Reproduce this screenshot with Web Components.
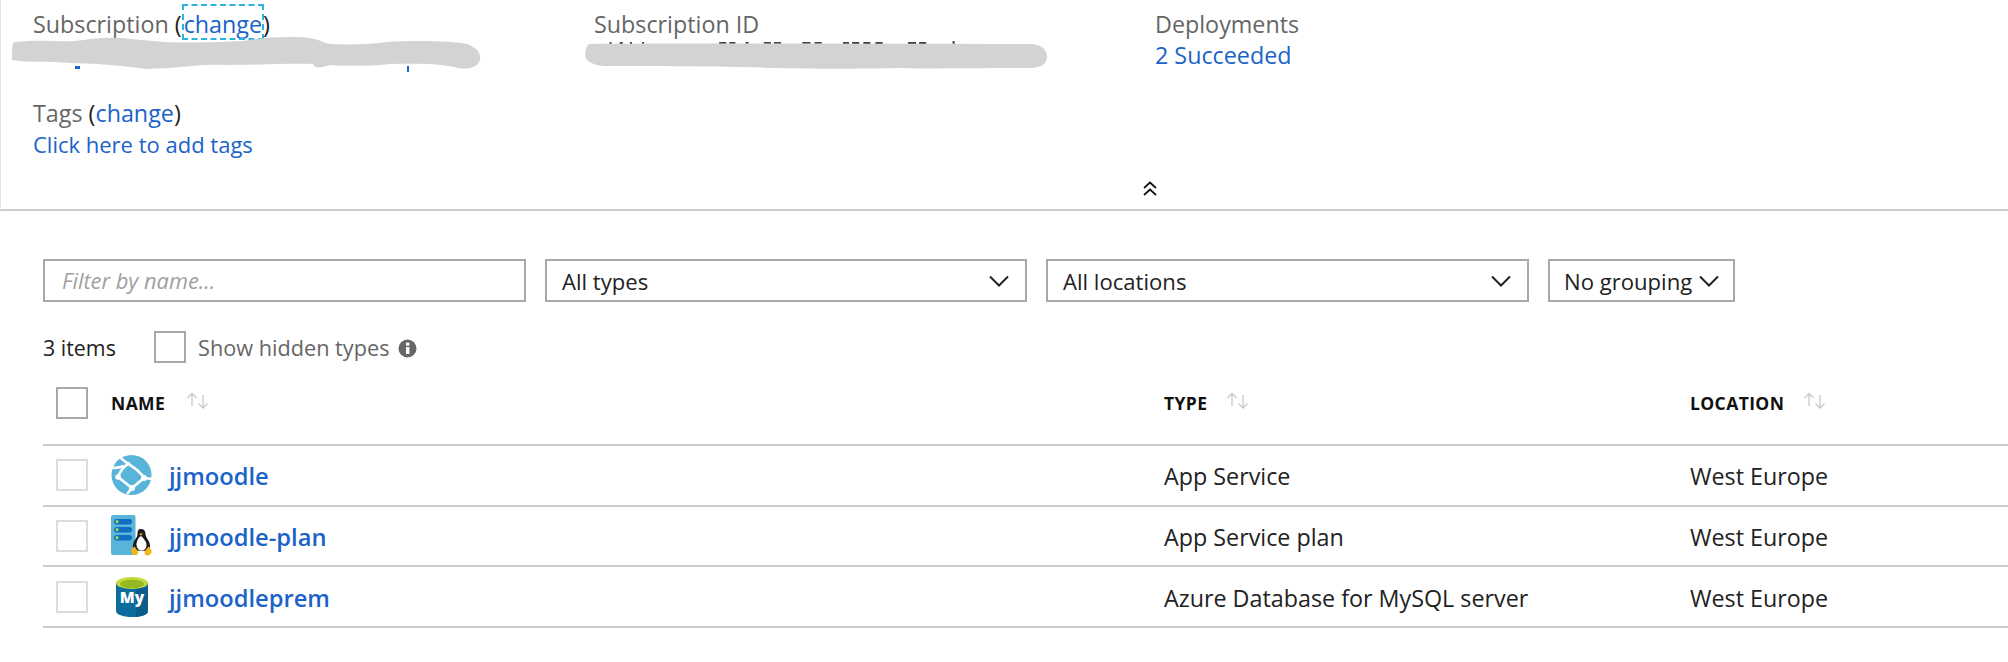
<!DOCTYPE html>
<html lang="en"><head><meta charset="utf-8"><title>Resource group</title>
<style>
html,body{margin:0;background:#fff}
body{font:22px/28px "Open Sans","Noto Sans",sans-serif;color:#111;--link:#1a63c8;width:2008px;height:662px;overflow:hidden}
</style></head><body>
<az-essentials>
  <az-field label="Subscription" change focused><az-redact kind="a"></az-redact></az-field>
  <az-field label="Subscription ID"><az-redact kind="b"></az-redact></az-field>
  <az-field label="Deployments"><az-link>2 Succeeded</az-link></az-field>
  <az-field label="Tags" change class="tags"><az-link small>Click here to add tags</az-link></az-field>
</az-essentials>
<az-toolbar>
  <az-input placeholder="Filter by name..."></az-input>
  <az-select w="482">All types</az-select>
  <az-select w="483">All locations</az-select>
  <az-select w="187" tight>No grouping</az-select>
</az-toolbar>
<az-count></az-count>
<az-table>
  <az-head></az-head>
  <az-row name="jjmoodle" type="App Service" location="West Europe" icon="web"></az-row>
  <az-row name="jjmoodle-plan" type="App Service plan" location="West Europe" icon="plan"></az-row>
  <az-row name="jjmoodleprem" type="Azure Database for MySQL server" location="West Europe" icon="mysql"></az-row>
</az-table>
<script>
const base=':host{box-sizing:border-box}*{box-sizing:border-box}';
function def(name,html){
  customElements.define(name,class extends HTMLElement{
    constructor(){super();this.attachShadow({mode:'open'})}
    connectedCallback(){this.shadowRoot.innerHTML='<style>'+base+'</style>'+(typeof html==='function'?html(this):html);}
  });
}
def('az-link',el=>`<style>:host{display:inline;color:var(--link);font-size:${el.hasAttribute('small')?'22px':'23.3px'}}</style><slot></slot>`);
def('az-check',el=>`<style>:host{display:block;width:32px;height:32px;border:2px solid ${el.getAttribute('tone')||'#a8a8a8'};background:#fff;flex:none}</style>`);
def('az-essentials',`<style>
:host{display:grid;grid-template-columns:561px 561px 561px;grid-auto-rows:min-content;row-gap:30px;height:211px;padding:10px 0 0 33px;border-bottom:2px solid #ccc;border-left:1px solid #e4e4e4;position:relative}
.chev{position:absolute;left:1140px;top:180px;width:18px;height:17px}
</style><slot></slot>
<svg class="chev" viewBox="0 0 18 17" fill="none" stroke="#111" stroke-width="1.7"><path d="M3 8 9 2.500 15 8M3 15 9 9.500 15 15"/></svg>`);
def('az-field',el=>`<style>
:host{display:block;position:relative;margin-left:-1px}
.l{color:#666;height:28px;font-size:23.3px}.p{color:#222}
.c{color:var(--link)}
.f{outline:2px dashed #27b4dd;display:inline-block;height:32px;line-height:28px;vertical-align:top;margin:-4px 1px 0 2px;padding-top:4px}
.v{margin-top:3px;height:28px}
</style>
<div class="l">${el.getAttribute('label')}${el.hasAttribute('change')?` <span class="p">(<span class="c${el.hasAttribute('focused')?' f':''}">change</span>)</span>`:''}</div>
<div class="v"><slot></slot></div>`);
def('az-redact',el=>{
 const a=el.getAttribute('kind')==='a';
 return `<style>:host{display:block;position:relative;height:28px}svg{position:absolute;overflow:visible}</style>`+
 (a?`<svg style="left:-22px;top:-2px" width="470" height="34" viewBox="0 0 470 34">
 <path d="M64 27h5v3h-5zM396 27h2v6h-2z" fill="#1a63c8"/>
 <path fill="#d2d3d5" d="M4 3C30 0 50 3 64 2 78 1 85 -2 110 -1 125 0 135 2 155 3 175 4 215 3 232 2 250 -2 285 -3 298 -1 308 0 312 4 320 5 340 6 365 5 375 3 395 1 445 2 456 5 467 9 470 15 469 21 467 28 458 31 447 29 435 25 410 24 380 25 370 26 345 28 320 26 310 28 305 31 302 25 280 24 250 26 215 26 185 25 175 29 135 30 120 28 100 25 60 24 40 22 20 24 1 21 1 15 1 7 2 4 4 3Z"/></svg>`
 :`<svg style="left:-23px;top:0" width="477" height="36" viewBox="0 0 470 36" preserveAspectRatio="none">
 <path d="M38 1h2v2h-2zM48 1h3v2h-3zM58 1h2v2h-2zM70 1h2v2h-2zM146 1h7v2h-7zM156 1h6v2h-6zM172 1h3v2h-3zM190 1h7v2h-7zM200 1h7v2h-7zM228 1h8v2h-8zM240 1h7v2h-7zM268 1h6v2h-6zM277 1h7v2h-7zM288 1h7v2h-7zM300 1h7v2h-7zM332 1h8v2h-8zM343 1h7v2h-7zM376 0h2v3h-2z" fill="#444"/>
 <path fill="#d2d3d5" d="M18 3 C 120 2 300 3 452 3 C 465 3 469 10 469 15 C 469 22 465 27 452 27 C 380 27 345 28 320 27 C 300 28 200 28 175 26 C 150 26 100 25 35 25 C 22 25 14 20 14 14 C 14 8 16 4 18 3Z"/></svg>`);
});
def('az-toolbar',`<style>:host{display:flex;gap:19px;margin:48px 0 0 43px;height:43px}</style><slot></slot>`);
def('az-input',el=>`<style>:host{display:block;width:483px;height:43px;border:2px solid #a8a8a8;padding:6px 17px;font-style:italic;font-size:21.8px;color:#a0a0a0}</style>${el.getAttribute('placeholder')}`);
def('az-select',el=>`<style>:host{display:flex;align-items:center;justify-content:space-between;width:${el.getAttribute('w')}px;height:43px;border:2px solid #a8a8a8;padding:${el.hasAttribute('tight')?'1px 14px 0 14px':'1px 16px 0 15px'};color:#222;font-size:22.1px}
svg{flex:none;display:block}span{white-space:nowrap}</style><span><slot></slot></span>
<svg width="20" height="12" viewBox="0 0 20 12" fill="none" stroke="#222" stroke-width="2"><path d="M1 1.500 10 10.500 19 1.500"/></svg>`);
def('az-count',`<style>:host{display:flex;align-items:center;margin:29px 0 0 43px;height:32px}
.n{width:111px;color:#222;font-size:21.4px;padding-top:1px}.t{color:#666;margin-left:12px;font-size:21.7px;padding-top:1px}
svg{margin-left:9px;margin-top:2px}</style>
<span class="n">3 items</span><az-check></az-check><span class="t">Show hidden types</span>
<svg width="19" height="19" viewBox="0 0 19 19"><circle cx="9.500" cy="9.500" r="9" fill="#666"/><rect x="8" y="8" width="3.400" height="7" fill="#fff"/><rect x="8" y="3.600" width="3.400" height="3" fill="#fff"/></svg>`);
def('az-table',`<style>:host{display:block;margin:24px 0 0 43px}</style><slot></slot>`);
const cols='grid-template-columns:55px 1053px 526px 1fr';
const sort=`<svg width="24" height="17" viewBox="0 0 24 17" fill="none" stroke="#c8c8c8" stroke-width="1.300"><path d="M6 14V1.500M1.500 6 6 1.500 10.500 6M17 3v13M12.500 11.500 17 16l4.500-4.500"/></svg>`;
def('az-head',`<style>:host{display:grid;${cols};align-items:start;padding-left:13px;height:59px;border-bottom:2px solid #ccc}
.c{display:flex;gap:19px;font-weight:700;font-size:17.5px;letter-spacing:.4px;line-height:32px;color:#111}
.n{gap:21px}
svg{margin-top:5px}</style>
<az-check></az-check><div class="c n"><span>NAME</span>${sort}</div><div class="c"><span>TYPE</span>${sort}</div><div class="c"><span>LOCATION</span>${sort}</div>`);
const icons={
web:`<svg width="41" height="40" viewBox="0 0 41 40"><circle cx="20.500" cy="20" r="20" fill="#59b4d9"/><g fill="none" stroke="#fff" stroke-width="2.600"><path d="M8 1C12 6 18 9 26 15L34 23 41 24"/><path d="M19 8C14 10 9 16 7 22L21 33 33 23"/><path d="M21 33 16 39"/><path d="M0 13C4 13 8 13 13 11"/></g><g fill="#fff"><circle cx="7" cy="22" r="2.800"/><circle cx="33" cy="23" r="3"/><circle cx="21" cy="33" r="3"/></g></svg>`,
plan:`<svg width="41" height="41" viewBox="0 0 41 41"><rect x="0" y="0" width="24.500" height="40" rx="2" fill="#59b4d9"/><g fill="#0f6fbe"><rect x="3" y="4" width="18" height="5.500" rx="2.700"/><rect x="3" y="12" width="18" height="5.500" rx="2.700"/><rect x="3" y="20" width="18" height="5.500" rx="2.700"/></g><g fill="#a9d04a"><circle cx="6" cy="6.700" r="1.600"/><circle cx="6" cy="14.700" r="1.600"/><circle cx="6" cy="22.700" r="1.600"/></g>
<path fill="#1a1a1a" d="M30 14c3 0 4.500 2 4.500 5 0 3 2.500 5 4 9 1 3 .5 6-1 8l-14-.5c-2-2.500-2-5-1-8 1-3 4-5 4-8.500 0-3 .5-5 3.500-5z"/>
<path fill="#fff" d="M30 21c-2 1-4 4-4.500 7.500-.4 3.500 1.500 6.500 4.500 7 3 .5 5.500-2 5.500-5.500 0-3-3-7-5.500-9z"/>
<path fill="#f0b71c" d="M28 18.500h4l-2 2.200zM19.500 35l4-3.500 4 5.500-1.500 3h-4zM40.500 35l-3-3.500-4 5 .5 3.500 3.500.5 3-2.500z"/></svg>`,
mysql:`<svg width="34" height="40" viewBox="0 0 34 40" style="margin-left:4px"><path d="M1 6v28c0 3.500 7 6 16 6s16-2.500 16-6V6z" fill="#0c6c9e"/><path d="M21 11h12v23c0 3-5 5.500-12 6z" fill="#0a5d8a"/><ellipse cx="17" cy="6" rx="16" ry="6" fill="#c6d93a"/><ellipse cx="17" cy="7" rx="12" ry="4.300" fill="#93b822"/><text x="17" y="26" text-anchor="middle" font-family="Open Sans" font-weight="800" font-size="15.500" fill="#fff">My</text></svg>`};
def('az-row',el=>`<style>:host{display:grid;${cols};align-items:center;padding-left:13px;height:60.67px;border-bottom:2px solid #ccc;color:#222;font-size:23.3px}
.n{display:flex;align-items:center;color:var(--link);font-weight:600;font-size:23.700px}
.i{width:58px;flex:none;display:flex}.i svg{display:block}
.tx{padding-top:2px}
</style>
<az-check tone="#dcdcdc"></az-check><div class="n"><span class="i">${icons[el.getAttribute('icon')]}</span><span class="tx">${el.getAttribute('name')}</span></div><div class="tx">${el.getAttribute('type')}</div><div class="tx">${el.getAttribute('location')}</div>`);
</script>
</body></html>
